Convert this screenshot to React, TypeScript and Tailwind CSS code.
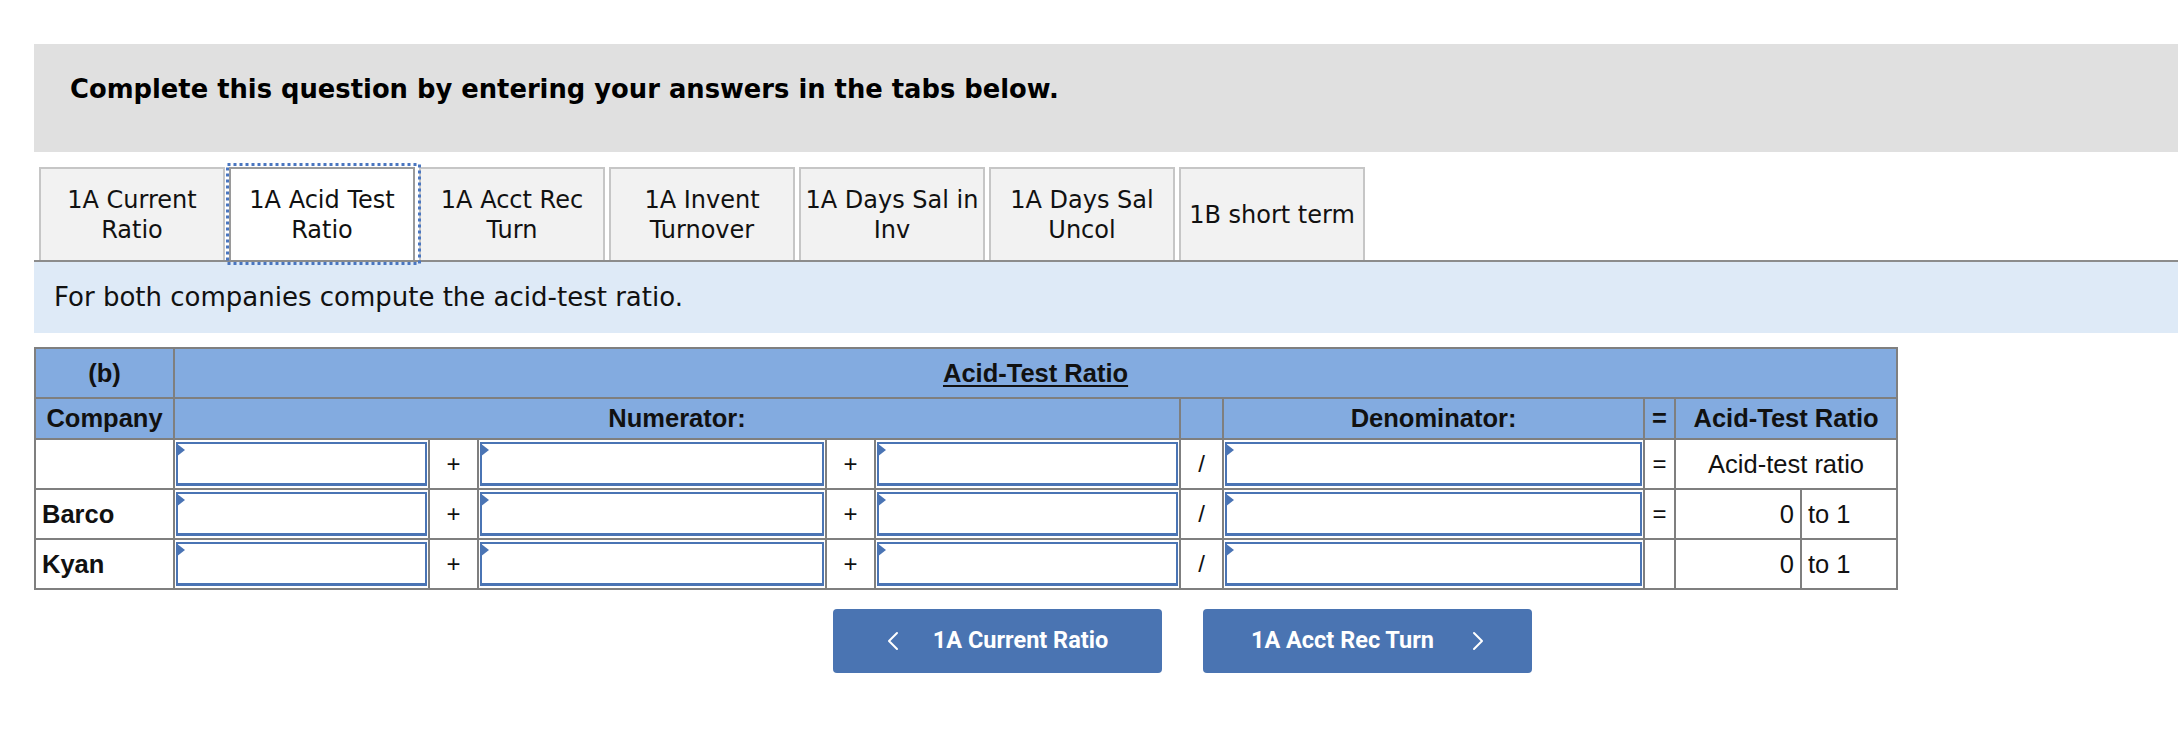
import React from "react";

const tabs = [
  ["1A Current", "Ratio"],
  ["1A Acid Test", "Ratio"],
  ["1A Acct Rec", "Turn"],
  ["1A Invent", "Turnover"],
  ["1A Days Sal in", "Inv"],
  ["1A Days Sal", "Uncol"],
  ["1B short term"],
];

const cell = "border-2 border-[#7f7f7f]";

const InputCell = () => (
  <td className={`${cell} p-[1px]`}>
    <div className="relative h-[44px] border-2 border-b-[3px] border-[#4a74b4] bg-white">
      <span className="absolute -left-[2px] -top-[1px] h-0 w-0 border-y-[7px] border-l-[9px] border-y-transparent border-l-[#4a74b4]" />
    </div>
  </td>
);

const SignCell = ({ sign }: { sign: string }) => (
  <td className={`${cell} text-center text-[24px]`}>{sign}</td>
);

const Chevron = ({ dir }: { dir: "left" | "right" }) => (
  <svg width="12" height="20" viewBox="0 0 12 20" fill="none">
    <polyline
      points={dir === "left" ? "10,2 2,10 10,18" : "2,2 10,10 2,18"}
      stroke="white"
      strokeWidth="2"
      strokeLinecap="round"
      strokeLinejoin="round"
    />
  </svg>
);

const App = () => {
  const rows = [
    { name: "", eq: "=", result: null },
    { name: "Barco", eq: "=", result: "0" },
    { name: "Kyan", eq: "", result: "0" },
  ];

  return (
    <div className="min-h-[732px] w-[2178px] bg-white pl-[34px] pt-[44px]">
      <div className="h-[108px] bg-[#e0e0e0] pl-[36px] pt-[26px] font-['DejaVu_Sans',sans-serif] text-[25.8px] font-bold text-black">
        Complete this question by entering your answers in the tabs below.
      </div>

      {/* tabs */}
      <div className="mt-[15px] flex gap-[4px] pl-[5px] font-['DejaVu_Sans',sans-serif] text-[24px] leading-[30px] text-[#111]">
        {tabs.map((t, i) =>
          i === 1 ? (
            <div
              key={i}
              className="relative flex h-[93px] w-[186px] flex-col items-center justify-center border-2 border-b-0 border-[#9a9a9a] bg-white"
            >
              {t.map((l) => (
                <span key={l}>{l}</span>
              ))}
              <svg className="absolute -left-[5px] -top-[6px] h-[102px] w-[195px]" viewBox="0 0 195 102">
                <rect
                  x="1.5"
                  y="1.5"
                  width="192"
                  height="99"
                  fill="none"
                  stroke="#4a76c0"
                  strokeWidth="3"
                  strokeDasharray="3 3"
                />
              </svg>
            </div>
          ) : (
            <div
              key={i}
              className="flex h-[93px] w-[186px] flex-col items-center justify-center border-2 border-b-0 border-[#c6c6c6] bg-[#f2f2f2]"
            >
              {t.map((l) => (
                <span key={l}>{l}</span>
              ))}
            </div>
          )
        )}
      </div>
      <div className="h-[2px] bg-[#8c8c8c]" />
      <div className="flex h-[71px] items-center bg-[#deeaf7] pl-[20px] font-['DejaVu_Sans',sans-serif] text-[26px] text-[#111]">
        For both companies compute the acid-test ratio.
      </div>

      {/* table */}
      <table className="mt-[14px] w-[1862px] table-fixed border-collapse font-['Liberation_Sans',Arial,sans-serif] text-[25.5px] text-[#111]">
        <colgroup>
          <col className="w-[139px]" />
          <col className="w-[255px]" />
          <col className="w-[49px]" />
          <col className="w-[348px]" />
          <col className="w-[49px]" />
          <col className="w-[305px]" />
          <col className="w-[43px]" />
          <col className="w-[421px]" />
          <col className="w-[31px]" />
          <col className="w-[126px]" />
          <col className="w-[96px]" />
        </colgroup>
        <thead className="bg-[#83abe0] font-bold">
          <tr className="h-[50px]">
            <th className={`${cell} font-bold`}>(b)</th>
            <th colSpan={10} className={`${cell} font-bold`}>
              <span className="underline decoration-2 underline-offset-[3px]">Acid-Test Ratio</span>
            </th>
          </tr>
          <tr className="h-[41px]">
            <th className={`${cell} font-bold`}>Company</th>
            <th colSpan={5} className={`${cell} font-bold`}>
              Numerator:
            </th>
            <th className={cell} />
            <th className={`${cell} font-bold`}>Denominator:</th>
            <th className={`${cell} font-bold`}>=</th>
            <th colSpan={2} className={`${cell} font-bold`}>
              Acid-Test Ratio
            </th>
          </tr>
        </thead>
        <tbody>
          {rows.map((r, i) => (
            <tr key={i} className="h-[50px]">
              <td className={`${cell} pl-[6px] font-bold`}>{r.name}</td>
              <InputCell />
              <SignCell sign="+" />
              <InputCell />
              <SignCell sign="+" />
              <InputCell />
              <SignCell sign="/" />
              <InputCell />
              <SignCell sign={r.eq} />
              {r.result === null ? (
                <td colSpan={2} className={`${cell} text-center`}>
                  Acid-test ratio
                </td>
              ) : (
                <>
                  <td className={`${cell} pr-[6px] text-right`}>{r.result}</td>
                  <td className={`${cell} pl-[6px]`}>to 1</td>
                </>
              )}
            </tr>
          ))}
        </tbody>
      </table>

      {/* nav buttons */}
      <div className="mt-[19px] flex gap-[41px] pl-[799px] font-['Roboto',sans-serif] text-[23.5px] font-bold text-white">
        <button className="flex h-[64px] w-[329px] items-center justify-center gap-[34px] rounded-[4px] bg-[#4a74b2]">
          <Chevron dir="left" />
          <span>1A Current Ratio</span>
        </button>
        <button className="flex h-[64px] w-[329px] items-center justify-center gap-[38px] rounded-[4px] bg-[#4a74b2]">
          <span>1A Acct Rec Turn</span>
          <Chevron dir="right" />
        </button>
      </div>
    </div>
  );
};

export default App;
